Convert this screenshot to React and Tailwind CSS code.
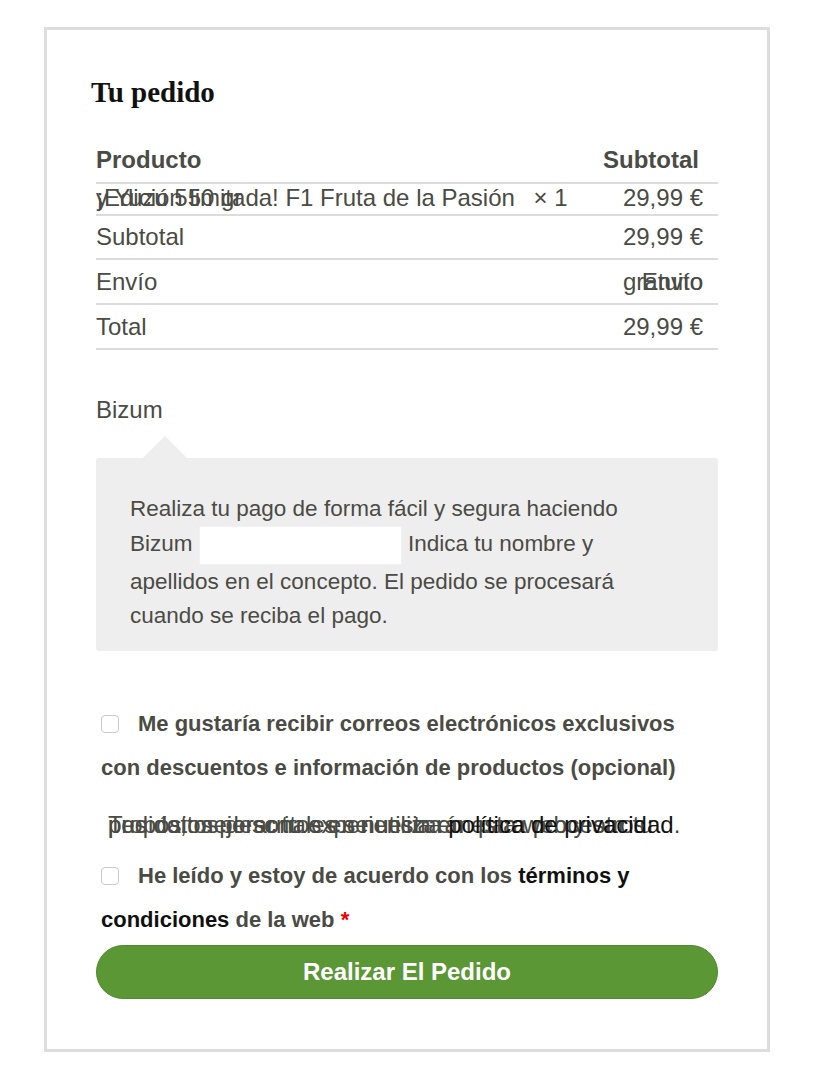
import React from 'react';

const rows = [
  { label: 'Subtotal', value: '29,99 €', h: 'h-[44px]' },
  { label: 'Envío', value: null, h: 'h-[45px]' },
  { label: 'Total', value: '29,99 €', h: 'h-[45px]' },
];

function Checkbox() {
  return (
    <span className="inline-block w-[18px] h-[18px] mr-[19px] align-[-2px] rounded-[4px] border border-[#c9c9c9] bg-white" />
  );
}

export default function App() {
  return (
    <div className="bg-white min-h-[1082px] pt-[27px] pl-[44px] text-[#4b4b45]" style={{ fontFamily: '"Liberation Sans", Arial, sans-serif' }}>
      <div className="w-[726px] border-[3px] border-[#dddddd] bg-white px-[49px] pt-[42px] pb-[50px]">
        <h3
          className="h-[40px] leading-[40px] -ml-[5px] text-[29px] font-bold text-[#111]"
          style={{ fontFamily: '"Liberation Serif", "Times New Roman", serif' }}
        >
          Tu pedido
        </h3>

        {/* order table */}
        <div className="mt-[25px] text-[24px]">
          <div className="flex h-[47px] items-center justify-between border-b-2 border-[#dcdcdc] font-bold">
            <span>Producto</span>
            <span className="pr-[19px]">Subtotal</span>
          </div>
          <div className="flex h-[32px] items-center justify-between border-b-2 border-[#dcdcdc] pb-[3px]">
            <div className="grid">
              <span className="col-start-1 row-start-1 whitespace-nowrap">y Yuzu 550 gr</span>
              <span className="col-start-1 row-start-1 whitespace-nowrap">
                ¡Edición limitada! F1 Fruta de la Pasión <span className="ml-[12px]">× 1</span>
              </span>
            </div>
            <span className="pr-[15px]">29,99 €</span>
          </div>
          {rows.map((r) => (
            <div key={r.label} className={`flex ${r.h} items-center justify-between border-b-2 border-[#dcdcdc]`}>
              <span>{r.label}</span>
              {r.value ? (
                <span className="pr-[15px]">{r.value}</span>
              ) : (
                <span className="grid justify-items-end pr-[15px]">
                  <span className="col-start-1 row-start-1">gratuito</span>
                  <span className="col-start-1 row-start-1">Envío</span>
                </span>
              )}
            </div>
          ))}
        </div>

        {/* payment method */}
        <div className="mt-[43px] text-[24px] leading-[34px]">Bizum</div>
        <div className="ml-[47px] mt-[9px] h-0 w-0 border-x-[22px] border-b-[22px] border-x-transparent border-b-[#eeeeee]" />
        <div className="rounded-[3px] bg-[#eeeeee] px-[34px] pt-[34px] pb-[18px] text-[22.5px] leading-[34px]">
          Realiza tu pago de forma fácil y segura haciendo Bizum{' '}
          <span className="inline-block h-[39px] w-[203px] align-middle border border-[#f2f2f2] bg-white" />{' '}
          Indica tu nombre y apellidos en el concepto. El pedido se procesará cuando se reciba el pago.
        </div>

        {/* newsletter */}
        <p className="mt-[51px] pl-[5px] text-[22px] font-bold leading-[44px]">
          <Checkbox />
          Me gustaría recibir correos electrónicos exclusivos con descuentos e información de productos (opcional)
        </p>

        {/* privacy note, lines drawn on top of each other */}
        <div className="mt-[18px] grid pl-[12px] text-[24px] leading-[34px]">
          <span className="col-start-1 row-start-1 whitespace-nowrap">
            Tus datos personales se utilizarán para procesar tu
          </span>
          <span className="col-start-1 row-start-1 whitespace-nowrap">
            pedido, mejorar tu experiencia en esta web y otros
          </span>
          <span className="col-start-1 row-start-1 whitespace-nowrap">
            propósitos descritos en nuestra <span className="text-[#111]">política de privacidad</span>.
          </span>
        </div>

        {/* terms */}
        <p className="mt-[12px] pl-[5px] text-[22px] font-bold leading-[44px]">
          <Checkbox />
          He leído y estoy de acuerdo con los <span className="text-[#111]">términos y condiciones</span> de la web{' '}
          <span className="text-[#e00]">*</span>
        </p>

        <button className="mt-[3px] flex h-[54px] w-full items-center justify-center rounded-full border border-[#4f8a2c] bg-[#5b9735] text-[24px] font-bold text-white">
          Realizar El Pedido
        </button>
      </div>
    </div>
  );
}
